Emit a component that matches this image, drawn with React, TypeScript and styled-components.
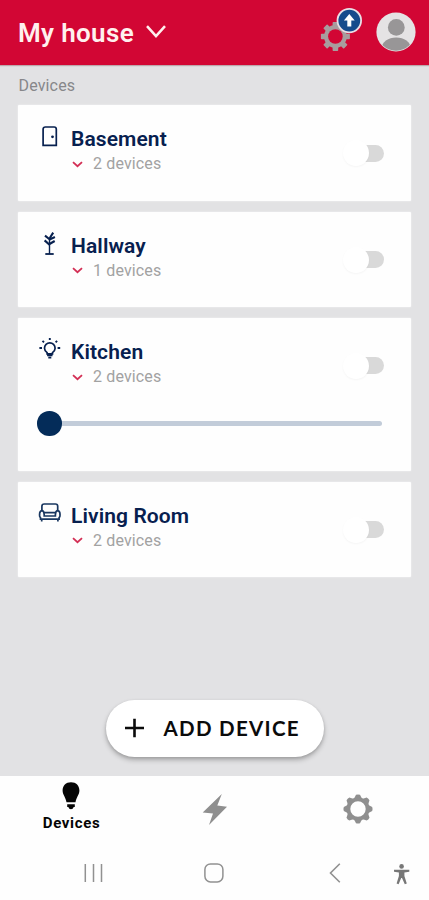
import React from 'react';
import styled, { createGlobalStyle } from 'styled-components';

const NAVY = '#07204f';
const RED = '#d20634';
const GREY = '#8f8f8f';

const GlobalStyle = createGlobalStyle`
  * { box-sizing: border-box; }
  body { margin: 0; background: #e2e2e4; }
  svg { display: block; flex: none; overflow: visible; }
  button { border: 0; padding: 0; background: none; font: inherit; color: inherit; }
`;

const Screen = styled.div`
  width: 429px;
  height: 900px;
  display: flex;
  flex-direction: column;
  background: #e2e2e4;
  font-family: Roboto, sans-serif;
  overflow: hidden;
`;

const Header = styled.header`
  height: 65px;
  flex: none;
  display: flex;
  align-items: center;
  justify-content: space-between;
  padding: 0 13px 0 18px;
  background: ${RED};
  box-shadow: 0 1px 1px rgba(120, 60, 70, 0.35);
`;

const HouseButton = styled.button`
  display: flex;
  align-items: center;
  gap: 12px;
  padding-bottom: 1px;
  color: #fff0ee;
`;

const HouseName = styled.h1`
  margin: 1px 0 0;
  font-size: 26px;
  font-weight: 600;
  line-height: 30px;
  letter-spacing: 0.35px;
`;

const HouseChevron = styled.span`
  padding-bottom: 2px;
`;

const HeaderActions = styled.div`
  display: flex;
  align-items: flex-start;
  gap: 14px;
  height: 53px;
`;

const AvatarSlot = styled.div`
  padding-top: 5.7px;
`;

const Main = styled.main`
  flex: 1;
  display: flex;
  flex-direction: column;
  padding: 10px 18px 19px;
`;

const SectionLabel = styled.h2`
  margin: 0 0 9.4px 0.5px;
  font-size: 16px;
  font-weight: 400;
  line-height: 21px;
  letter-spacing: 0.15px;
  color: #87878a;
`;

const Rooms = styled.div`
  display: flex;
  flex-direction: column;
  gap: 10.5px;
`;

const Card = styled.section<{ $tall?: boolean }>`
  height: ${(p) => (p.$tall ? 153.1 : 95.8)}px;
  padding: 18px 27px 0 18px;
  background: #fefefe;
  border-radius: 1px;
  box-shadow: 0 0 2px rgba(255, 255, 255, 0.7);
`;

const CardTop = styled.div`
  display: flex;
  align-items: flex-start;
`;

const IconSlot = styled.div`
  width: 35px;
  flex: none;
`;

const RoomText = styled.div`
  flex: 1;
  padding-top: 4.1px;
`;

const RoomName = styled.h3`
  margin: 0;
  font-size: 21px;
  font-weight: 600;
  line-height: 25px;
  letter-spacing: 0.1px;
  color: ${NAVY};
`;

const DeviceCount = styled.div`
  display: flex;
  align-items: center;
  gap: 10px;
  padding-left: 1px;
  font-size: 16px;
  font-weight: 400;
  line-height: 24px;
  letter-spacing: 0.13px;
  color: #a2a2a2;
`;

const Toggle = styled.button`
  width: 41px;
  height: 27px;
  margin-top: 16.5px;
  display: flex;
  align-items: center;
`;

const ToggleThumb = styled.span`
  width: 26px;
  height: 26px;
  flex: none;
  border-radius: 50%;
  background: #fff;
  box-shadow: 0 1px 2px rgba(0, 0, 0, 0.04);
  z-index: 1;
`;

const ToggleTrack = styled.span`
  width: 26px;
  height: 17px;
  margin-left: -11px;
  flex: none;
  border-radius: 0 9px 9px 0;
  background: #d9d9d9;
`;

const Slider = styled.div`
  height: 25px;
  margin: 21.8px 1px 0 1px;
  display: flex;
  align-items: center;
`;

const SliderThumb = styled.span`
  width: 24.5px;
  height: 24.5px;
  flex: none;
  border-radius: 50%;
  background: #042c59;
`;

const SliderTrack = styled.span`
  flex: 1;
  height: 5px;
  margin-right: 1px;
  border-radius: 0 3px 3px 0;
  background: #c2ccd9;
`;

const AddButton = styled.button`
  width: 218px;
  height: 57px;
  margin: auto auto 0;
  flex: none;
  display: flex;
  align-items: center;
  gap: 20px;
  padding: 0 0 1px 19px;
  border-radius: 29px;
  background: #fff;
  box-shadow: 0 3px 5px rgba(0, 0, 0, 0.25), 0 1px 3px rgba(0, 0, 0, 0.1);
  font-family: Lato, sans-serif;
  font-size: 20.5px;
  font-weight: 700;
  letter-spacing: 1.3px;
  line-height: 24px;
  color: #0b0b0b;
  white-space: nowrap;
`;

const TabBar = styled.nav`
  height: 70px;
  flex: none;
  display: grid;
  grid-template-columns: repeat(3, 143px);
  background: #fefefe;
`;

const Tab = styled.button<{ $active?: boolean }>`
  display: flex;
  flex-direction: column;
  align-items: center;
  justify-content: flex-start;
  padding-top: ${(p) => (p.$active ? 6 : 18)}px;
  padding-right: ${(p) => (p.$active ? 1 : 0)}px;
  color: ${(p) => (p.$active ? '#050505' : GREY)};
`;

const TabLabel = styled.span`
  margin: 4px -1px 0 0;
  font-size: 15px;
  font-weight: 700;
  line-height: 18px;
  letter-spacing: 0.65px;
`;

const SystemBar = styled.footer`
  height: 54px;
  flex: none;
  display: grid;
  grid-template-columns: 187px 54px 188px;
  background: #fefefe;
  color: #919191;
`;

const SystemSlot = styled.div<{ $left: number; $top: number }>`
  padding: ${(p) => p.$top}px 0 0 ${(p) => p.$left}px;
  display: flex;
  gap: 50px;
`;

type IconProps = { width: number; height: number };

const Chevron = ({ width, height, stroke }: IconProps & { stroke: number }) => (
  <svg width={width} height={height} viewBox={`0 0 ${width} ${height}`} fill="none" stroke="currentColor" strokeWidth={stroke}>
    <path d={`M1 1.2 L${width / 2} ${height - 1.8} L${width - 1} 1.2`} />
  </svg>
);

const RedMark = styled.span`
  color: #d32f55;
`;

const SettingsUpdate = () => (
  <svg width="42" height="47" viewBox="320 6 42 47">
    <g fill="#a89c9e">
      {[0, 45, 90, 135].map((a) => (
        <rect key={a} x="332.6" y="22" width="5.6" height="29" rx="0.8" transform={`rotate(${a} 335.4 36.5)`} />
      ))}
      <circle cx="335.4" cy="36.5" r="11.4" />
    </g>
    <circle cx="335.4" cy="36.5" r="7.3" fill={RED} />
    <circle cx="349.3" cy="20.6" r="11.8" fill="#164b8c" stroke="#eadfe5" strokeWidth="1.8" />
    <path d="M349.3 14 L354.7 20.5 H351.3 V26.5 H347.3 V20.5 H343.9 Z" fill="#fff" />
  </svg>
);

const Avatar = () => (
  <svg width="40" height="40" viewBox="0 0 40 40">
    <clipPath id="avatar-clip">
      <circle cx="20" cy="20" r="18.8" />
    </clipPath>
    <circle cx="20" cy="20" r="19.6" fill="#e5e3e4" />
    <g clipPath="url(#avatar-clip)" fill="#989697">
      <circle cx="20.3" cy="15.4" r="8.4" />
      <ellipse cx="20.2" cy="36" rx="14.5" ry="10.6" />
    </g>
  </svg>
);

const roomIconProps = { width: 28, height: 28, viewBox: '0 0 28 28', fill: 'none', stroke: NAVY, strokeWidth: 1.7 };

const DoorIcon = () => (
  <svg {...roomIconProps}>
    <path d="M7.1 22.4 V6.3 Q7.1 4 9.4 4 H18.1 Q20.3 4 20.3 6.3 V22.4 Z" />
    <circle cx="16.5" cy="13.8" r="1.4" fill={NAVY} stroke="none" />
  </svg>
);

const PlantIcon = () => (
  <svg {...roomIconProps}>
    <path d="M13.5 24 V8" strokeWidth="1.4" />
    <path d="M9.3 24 H17.7" strokeWidth="1.8" />
    <path d="M13.5 14.8 L8.6 10.4 M13.5 14 L18.7 11 M13.5 9.2 L9 5.6 M13.5 9.6 L18.9 7 M13.8 8 L17.2 2.6" strokeWidth="2.1" />
  </svg>
);

const LampIcon = () => (
  <svg {...roomIconProps}>
    <path d="M11.1 17.9 V16.6 Q8.5 14.6 8.5 12.2 A5.3 5.3 0 0 1 19.1 12.2 Q19.1 14.6 16.5 16.6 V17.9 Z M11.1 19.4 H16.5 M12.3 21.6 H15.3" />
    <path d="M13.8 2 V4 M6.5 4.8 L8 6.3 M21.1 4.8 L19.6 6.3 M3.4 12 H6 M21.6 12 H24.2" strokeWidth="1.9" />
  </svg>
);

const SofaIcon = () => (
  <svg {...roomIconProps} stroke="#193760">
    <path d="M5.9 10 V6.3 Q5.9 4 8.2 4 H19.4 Q21.7 4 21.7 6.3 V10" />
    <path d="M4.5 19.2 V17.6 Q3.2 16.6 3.7 13 Q4.2 10.6 6.2 10.6 Q8.1 11 8.2 14.8 V16 H19.4 V14.8 Q19.5 11 21.4 10.6 Q23.4 10.6 23.9 13 Q24.4 16.6 23.1 17.6 V19.2 Z" />
    <path d="M8 12.6 H19.6 M5.7 19.2 V21.5 M21.9 19.2 V21.5" />
  </svg>
);

const BulbIcon = () => (
  <svg width="18" height="28" viewBox="0 0 18 28" fill="currentColor">
    <path d="M9 0.3 C14.2 0.3 17.4 3.8 17.4 8.5 C17.4 12.8 14.2 15.2 13.5 20.3 H4.5 C3.8 15.2 0.6 12.8 0.6 8.5 C0.6 3.8 3.8 0.3 9 0.3 Z" />
    <path d="M5.2 22.3 H12.8 V25 H11.7 Q11 27.2 9 27.2 Q7 27.2 6.3 25 H5.2 Z" />
  </svg>
);

const BoltIcon = () => (
  <svg width="26" height="31" viewBox="0 0 26 31" fill="currentColor">
    <path d="M19.8 0 L0.7 18.4 L11 19.6 L7 31 L25 12.8 L15.3 11.6 Z" />
  </svg>
);

const GearIcon = () => (
  <svg width="30" height="30" viewBox="0 0 30 30" fill="currentColor">
    {[0, 45, 90, 135, 180, 225, 270, 315].map((a) => (
      <path key={a} d="M10.8 5 L13 0.8 Q15 0 17 0.8 L19.2 5 Z" transform={`rotate(${a} 15 15)`} />
    ))}
    <circle cx="15" cy="15" r="9.6" fill="none" stroke="currentColor" strokeWidth="3.8" />
  </svg>
);

const rooms = [
  { name: 'Basement', count: 2, icon: <DoorIcon /> },
  { name: 'Hallway', count: 1, icon: <PlantIcon /> },
  { name: 'Kitchen', count: 2, icon: <LampIcon />, dimmer: true },
  { name: 'Living Room', count: 2, icon: <SofaIcon /> },
];

export default function App() {
  return (
    <>
      <GlobalStyle />
      <Screen>
        <Header>
          <HouseButton>
            <HouseName>My house</HouseName>
            <HouseChevron>
              <Chevron width={20} height={13} stroke={2.5} />
            </HouseChevron>
          </HouseButton>
          <HeaderActions>
            <SettingsUpdate />
            <AvatarSlot>
              <Avatar />
            </AvatarSlot>
          </HeaderActions>
        </Header>
        <Main>
          <SectionLabel>Devices</SectionLabel>
          <Rooms>
            {rooms.map((room) => (
              <Card key={room.name} $tall={room.dimmer}>
                <CardTop>
                  <IconSlot>{room.icon}</IconSlot>
                  <RoomText>
                    <RoomName>{room.name}</RoomName>
                    <DeviceCount>
                      <RedMark>
                        <Chevron width={11} height={7} stroke={1.8} />
                      </RedMark>
                      {room.count} devices
                    </DeviceCount>
                  </RoomText>
                  <Toggle aria-label={`Toggle ${room.name}`}>
                    <ToggleThumb />
                    <ToggleTrack />
                  </Toggle>
                </CardTop>
                {room.dimmer && (
                  <Slider>
                    <SliderThumb />
                    <SliderTrack />
                  </Slider>
                )}
              </Card>
            ))}
          </Rooms>
          <AddButton>
            <svg width="19" height="20" viewBox="0 0 19 20" stroke="#0b0b0b" strokeWidth="2.6">
              <path d="M9.5 0.7 V19.3 M0 10 H19" />
            </svg>
            ADD DEVICE
          </AddButton>
        </Main>
        <TabBar>
          <Tab $active>
            <BulbIcon />
            <TabLabel>Devices</TabLabel>
          </Tab>
          <Tab aria-label="Actions">
            <BoltIcon />
          </Tab>
          <Tab aria-label="Settings">
            <GearIcon />
          </Tab>
        </TabBar>
        <SystemBar>
          <SystemSlot $left={84} $top={18}>
            <svg width="19" height="19" viewBox="0 0 19 19" stroke="currentColor" strokeWidth="1.5">
              <path d="M1.3 0 V18 M9.5 0 V18 M17.5 0 V18" />
            </svg>
          </SystemSlot>
          <SystemSlot $left={17} $top={17}>
            <svg width="20" height="20" viewBox="0 0 20 20" fill="none" stroke="currentColor" strokeWidth="1.5">
              <rect x="0.9" y="0.9" width="18" height="18" rx="5.6" />
            </svg>
          </SystemSlot>
          <SystemSlot $left={88} $top={17}>
            <svg width="12" height="20" viewBox="0 0 12 20" fill="none" stroke="currentColor" strokeWidth="1.6">
              <path d="M10.8 0.8 L1.5 10 L10.8 19.2" />
            </svg>
            <svg width="18" height="22" viewBox="0 0 18 22" fill="#777">
              <circle cx="10.6" cy="3.4" r="2.3" />
              <path d="M3 6.7 H18.3 V8.7 L13.4 9.5 V13 L15.8 20.4 L13.8 21.2 L11 15 H10.2 L7.6 21.2 L5.6 20.4 L7.9 13 V9.5 L3 8.7 Z" />
            </svg>
          </SystemSlot>
        </SystemBar>
      </Screen>
    </>
  );
}
